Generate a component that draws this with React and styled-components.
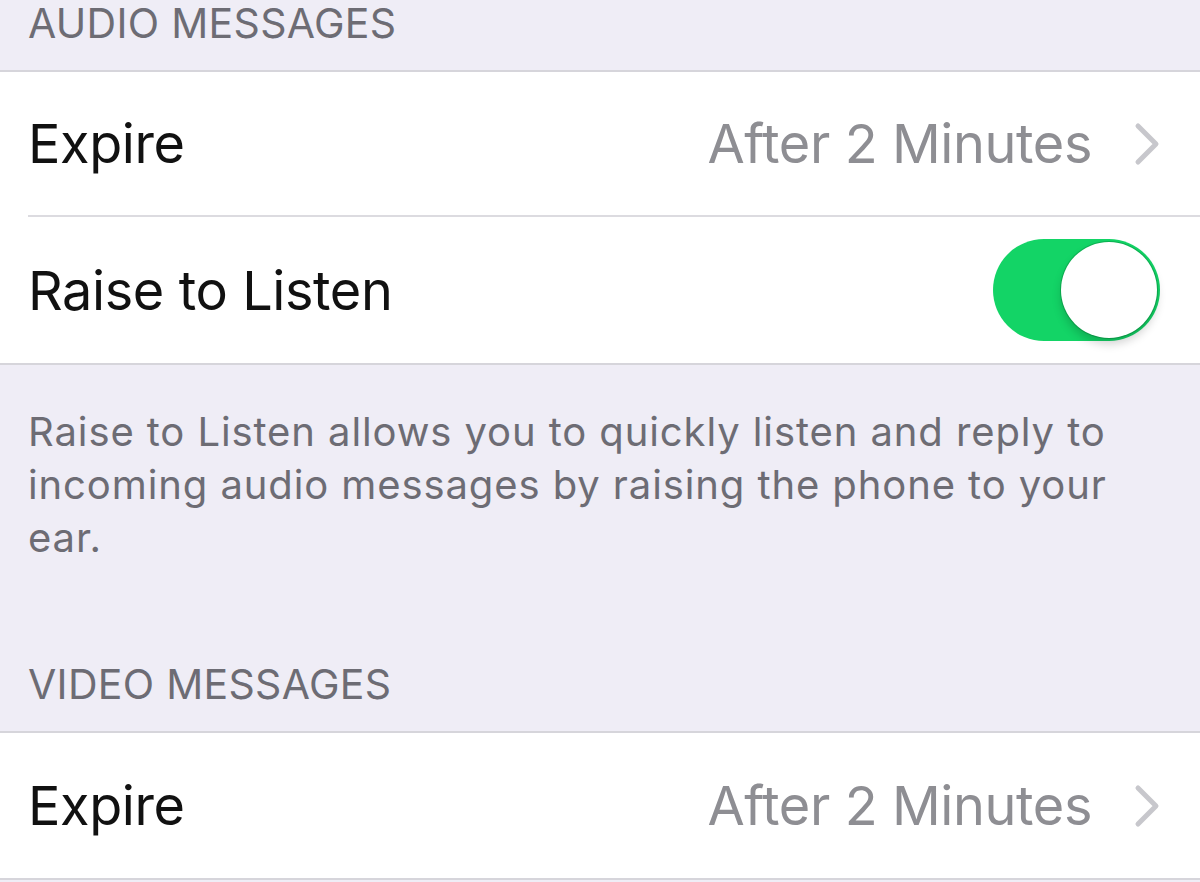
import React from "react";
import styled, { createGlobalStyle } from "styled-components";

const Global = createGlobalStyle`
  html, body { margin: 0; padding: 0; }
  body {
    background: #efedf6;
    font-family: Inter, "Noto Sans", "Liberation Sans", sans-serif;
    -webkit-font-smoothing: antialiased;
  }
`;

const Page = styled.div`
  width: 1200px;
  height: 882px;
  overflow: hidden;
  background: #efedf6;
  display: flex;
  flex-direction: column;
`;

const SectionHeader = styled.div`
  height: ${(p) => p.$height}px;
  box-sizing: border-box;
  display: flex;
  align-items: flex-end;
  padding: 0 28px 26px;
  font-size: 41px;
  line-height: 42px;
  letter-spacing: 0.3px;
  color: #6d6c74;
  border-bottom: 2px solid #d6d5db;
`;

const Group = styled.div`
  background: #ffffff;
  border-bottom: 2px solid #d6d5db;
`;

const Row = styled.div`
  height: ${(p) => p.$height || 145}px;
  display: flex;
  align-items: center;
  justify-content: space-between;
  margin-left: 28px;
  padding-right: 38px;
  box-sizing: border-box;
  border-bottom: ${(p) => (p.$last ? "none" : "2px solid #dcdbe0")};
`;

const Label = styled.span`
  font-size: 54px;
  color: #111111;
  letter-spacing: -0.4px;
`;

const Accessory = styled.div`
  display: flex;
  align-items: center;
  gap: 42px;
`;

const Value = styled.span`
  font-size: 54px;
  color: #8e8e93;
  letter-spacing: -0.4px;
`;

const Chevron = () => (
  <svg width="28" height="44" viewBox="0 0 28 44" fill="none">
    <path d="M4 4 L22 22 L4 40" stroke="#c7c7cc" strokeWidth="5" strokeLinecap="round" strokeLinejoin="round" />
  </svg>
);

const Track = styled.div`
  width: 167px;
  height: 102px;
  border-radius: 51px;
  background: #13d466;
  position: relative;
  margin-right: 2px;
`;

const Knob = styled.div`
  position: absolute;
  right: 3px;
  top: 3px;
  width: 96px;
  height: 96px;
  border-radius: 50%;
  background: #ffffff;
  box-shadow: 0 6px 10px rgba(0, 0, 0, 0.18), 0 0 0 1px rgba(0, 120, 50, 0.35);
`;

const Footer = styled.div`
  padding: 40px 40px 0 28px;
  font-size: 40px;
  line-height: 53px;
  letter-spacing: 0.9px;
  color: #6d6c74;
  height: 254px;
  box-sizing: border-box;
`;

export default function App() {
  return (
    <>
      <Global />
      <Page>
        <SectionHeader $height={72}>AUDIO MESSAGES</SectionHeader>
        <Group>
          <Row>
            <Label>Expire</Label>
            <Accessory>
              <Value>After 2 Minutes</Value>
              <Chevron />
            </Accessory>
          </Row>
          <Row $height={146} $last>
            <Label>Raise to Listen</Label>
            <Track>
              <Knob />
            </Track>
          </Row>
        </Group>
        <Footer>
          Raise to Listen allows you to quickly listen and reply to incoming audio messages by raising the phone to your ear.
        </Footer>
        <SectionHeader $height={114}>VIDEO MESSAGES</SectionHeader>
        <Group>
          <Row $last>
            <Label>Expire</Label>
            <Accessory>
              <Value>After 2 Minutes</Value>
              <Chevron />
            </Accessory>
          </Row>
        </Group>
      </Page>
    </>
  );
}
